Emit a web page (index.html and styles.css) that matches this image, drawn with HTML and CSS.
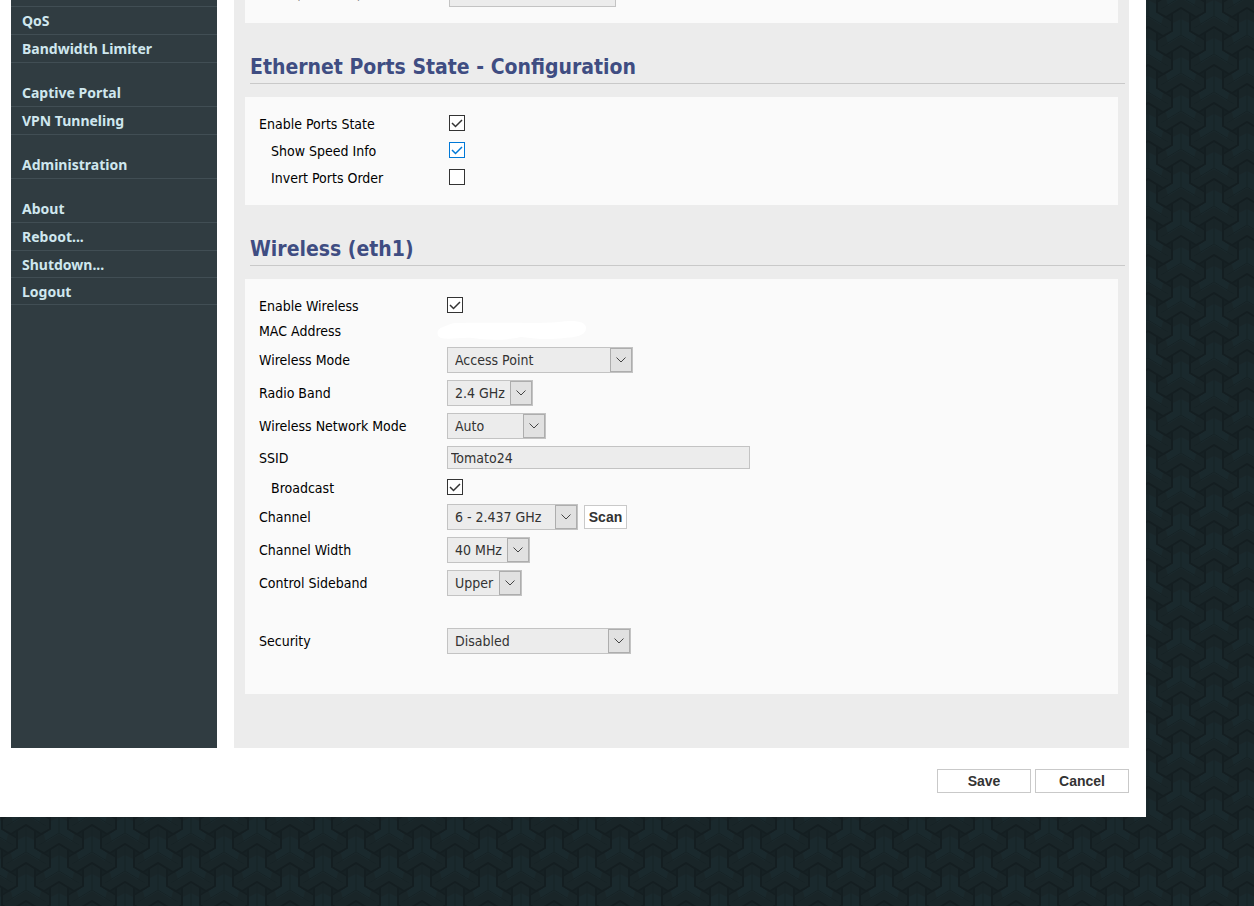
FILE: index.html
```
<!DOCTYPE html>
<html lang="en">
<head>
    <meta charset="UTF-8">
    <meta name="viewport" content="width=device-width, initial-scale=1.0">
    <title>Basic: Network</title>
    <link rel="stylesheet" href="styles.css">
</head>
<body>
    <div class="container">
        <div class="columns">
            <nav class="sidebar">
                <ul class="group">
                    <li><a href="#qos">QoS</a></li>
                    <li><a href="#bandwidth">Bandwidth Limiter</a></li>
                </ul>
                <ul class="group">
                    <li><a href="#captive">Captive Portal</a></li>
                    <li><a href="#vpn">VPN Tunneling</a></li>
                </ul>
                <ul class="group">
                    <li><a href="#admin">Administration</a></li>
                </ul>
                <ul class="group">
                    <li><a href="#about">About</a></li>
                    <li><a href="#reboot">Reboot...</a></li>
                    <li><a href="#shutdown">Shutdown...</a></li>
                    <li><a href="#logout">Logout</a></li>
                </ul>
            </nav>

            <form class="content" id="networkForm">
                <div class="section previous">
                    <div class="row">
                        <label for="wins">WINS <i>(for DHCP)</i></label>
                        <input type="text" class="text short" id="wins">
                    </div>
                </div>

                <h2>Ethernet Ports State - Configuration</h2>
                <div class="section ports">
                    <div class="row check">
                        <label for="ports_state">Enable Ports State</label>
                        <input type="checkbox" id="ports_state" checked>
                    </div>
                    <div class="row check">
                        <label class="indent" for="speed_info">Show Speed Info</label>
                        <input type="checkbox" class="active" id="speed_info" checked>
                    </div>
                    <div class="row check">
                        <label class="indent" for="invert_ports">Invert Ports Order</label>
                        <input type="checkbox" id="invert_ports">
                    </div>
                </div>

                <h2>Wireless (eth1)</h2>
                <div class="section wireless">
                    <div class="row check">
                        <label for="wl_enable">Enable Wireless</label>
                        <input type="checkbox" id="wl_enable" checked>
                    </div>
                    <div class="row mac">
                        <span class="label">MAC Address</span>
                        <svg class="hidden-mac" width="150" height="20" viewBox="0 0 150 20">
                            <path d="M6 6C12 4 14 2 20 2C60 1 100 3 122 1C136 -1 149 0 149 7C149 15 138 16 128 17C110 19 100 18 84 16C66 20 50 19 36 17C24 16 12 19 4 17C-1 15 -1 8 6 6Z" fill="#fff"/>
                        </svg>
                    </div>
                    <div class="row">
                        <label for="wl_mode">Wireless Mode</label>
                        <select id="wl_mode" class="w-mode"><option>Access Point</option></select>
                    </div>
                    <div class="row">
                        <label for="wl_band">Radio Band</label>
                        <select id="wl_band" class="w-band"><option>2.4 GHz</option></select>
                    </div>
                    <div class="row">
                        <label for="wl_net">Wireless Network Mode</label>
                        <select id="wl_net" class="w-net"><option>Auto</option></select>
                    </div>
                    <div class="row ssid">
                        <label for="wl_ssid">SSID</label>
                        <input type="text" class="text" id="wl_ssid" value="Tomato24">
                    </div>
                    <div class="row check">
                        <label class="indent" for="wl_broadcast">Broadcast</label>
                        <input type="checkbox" id="wl_broadcast" checked>
                    </div>
                    <div class="row">
                        <label for="wl_channel">Channel</label>
                        <select id="wl_channel" class="w-channel"><option>6 - 2.437 GHz</option></select>
                        <button type="button" class="scan">Scan</button>
                    </div>
                    <div class="row">
                        <label for="wl_width">Channel Width</label>
                        <select id="wl_width" class="w-width"><option>40 MHz</option></select>
                    </div>
                    <div class="row">
                        <label for="wl_sideband">Control Sideband</label>
                        <select id="wl_sideband" class="w-side"><option>Upper</option></select>
                    </div>
                    <div class="row security">
                        <label for="wl_security">Security</label>
                        <select id="wl_security" class="w-security"><option>Disabled</option></select>
                    </div>
                </div>
            </form>
        </div>

        <div class="footer">
            <button type="submit" form="networkForm">Save</button>
            <button type="reset" form="networkForm">Cancel</button>
        </div>
    </div>
</body>
</html>
```

FILE: styles.css
```
* {
    box-sizing: border-box;
}
body {
    margin: 0;
    min-height: 100vh;
    font-family: Tahoma, "DejaVu Sans Condensed", sans-serif;
    font-size: 14px;
    color: #000;
    background-color: #182427;
    /* woven tripod tile, 66x38 */
    background-image: url("data:image/svg+xml,%3Csvg xmlns='http://www.w3.org/2000/svg' xmlns:xlink='http://www.w3.org/1999/xlink' width='66' height='38'%3E%3Cdefs%3E%3Cg id='t'%3E%3Cpath d='M-9-23L0-28L9-23V-4L24 5V15L15 20L0 11L-15 20L-24 15V5L-9-4Z' fill='%23192528' stroke='%23141e21' stroke-width='2'/%3E%3Cpath d='M-8-12L0-16L8-12V-4L15 1L13 9L0 1L-13 9L-15 1L-8-4Z' fill='%231a292d'/%3E%3Cpath d='M0-26V0L-20 12M0 0L20 12' fill='none' stroke='%23162225'/%3E%3C/g%3E%3C/defs%3E%3Crect width='66' height='38' fill='%23162124'/%3E%3Cuse xlink:href='%23t' x='33' y='51'/%3E%3Cuse xlink:href='%23t' x='0' y='32'/%3E%3Cuse xlink:href='%23t' x='66' y='32'/%3E%3Cuse xlink:href='%23t' x='33' y='13'/%3E%3Cuse xlink:href='%23t' x='0' y='-6'/%3E%3Cuse xlink:href='%23t' x='66' y='-6'/%3E%3C/svg%3E");
    background-position: 26px 22px;
}
.container {
    margin-right: 108px;
    padding: 0 17px 24px 11px;
    background-color: #fff;
}
.columns {
    display: flex;
    gap: 17px;
}
.sidebar {
    width: 206px;
    padding-top: 6px;
    background-color: #303c41;
    font-family: Tahoma, "Noto Sans", sans-serif;
}
.group {
    list-style: none;
    margin: 0 0 16px;
    padding: 0;
}
.group:first-child {
    border-top: 1px solid #414e54;
}
.group a {
    display: block;
    height: 28px;
    padding-left: 11px;
    border-bottom: 1px solid #414e54;
    color: #cfe7ee;
    font-weight: bold;
    line-height: 28px;
    text-decoration: none;
}
.group li:nth-child(n+3) a {
    height: 27px;
}
.content {
    flex: 1;
    padding: 0 11px 54px;
    background-color: #ececec;
}
h2 {
    margin: 28px -7px 13px 5px;
    height: 33px;
    border-bottom: 1px solid #c9c9c9;
    color: #3f4d82;
    font-size: 21px;
    line-height: 32px;
}
.section {
    padding: 14px;
    background-color: #fafafa;
}
.row {
    display: flex;
    align-items: center;
    height: 33px;
}
.row label, .row .label {
    width: 188px;
    line-height: 20px;
}
.row .indent {
    padding-left: 12px;
}
.row.check {
    height: 27px;
}
.check label {
    padding-top: 2px;
}
.previous {
    height: 23px;
    padding-top: 0;
    overflow: hidden;
}
.previous .row {
    height: 23px;
    margin-top: -16px;
}
.previous label, .ports .row label {
    width: 190px;
}
.previous label {
    padding-bottom: 4px;
}
.ports {
    padding: 12px 14px 15px;
}
.wireless {
    padding: 12px 14px 37px;
}
.wireless .mac {
    height: 25px;
}
.wireless .ssid {
    height: 31px;
}
.wireless .security {
    margin-top: 25px;
}
.hidden-mac {
    margin-left: -10px;
}
input[type="checkbox"] {
    appearance: none;
    width: 16px;
    height: 16px;
    margin: 0;
    border: 1px solid #333;
    background-color: #fff;
}
input[type="checkbox"]:checked {
    background-image: url("data:image/svg+xml,%3Csvg xmlns='http://www.w3.org/2000/svg' width='14' height='14'%3E%3Cpath d='M2 7L5.5 10.5L12 4' fill='none' stroke='%23333' stroke-width='1.5'/%3E%3C/svg%3E");
}
input[type="checkbox"].active {
    border-color: #0078d7;
    background-image: url("data:image/svg+xml,%3Csvg xmlns='http://www.w3.org/2000/svg' width='14' height='14'%3E%3Cpath d='M2 7L5.5 10.5L12 4' fill='none' stroke='%230078d7' stroke-width='1.5'/%3E%3C/svg%3E");
}
.text {
    width: 303px;
    height: 23px;
    padding: 0 3px;
    border: 1px solid #c3c3c3;
    background-color: #ececec;
    color: #333;
    font: inherit;
}
.short {
    width: 167px;
}
select {
    appearance: none;
    height: 26px;
    padding: 0 22px 0 7px;
    border: 1px solid #c3c3c3;
    border-radius: 0;
    color: #333;
    font: inherit;
    background: #ececec url("data:image/svg+xml,%3Csvg xmlns='http://www.w3.org/2000/svg' width='22' height='24'%3E%3Crect x='.5' y='.5' width='21' height='23' fill='%23e1e1e1' stroke='%23adadad'/%3E%3Cpath d='M6.5 9.5L11 14L15.5 9.5' fill='none' stroke='%23444'/%3E%3C/svg%3E") no-repeat right center;
}
.w-mode {
    width: 186px;
}
.w-band {
    width: 86px;
}
.w-net {
    width: 99px;
}
.w-channel {
    width: 131px;
}
.w-width {
    width: 83px;
}
.w-side {
    width: 75px;
}
.w-security {
    width: 184px;
}
button {
    width: 94px;
    height: 24px;
    padding: 0;
    border: 1px solid #c9c9c9;
    background-color: #fff;
    color: #333;
    font-family: "Liberation Sans", Arial, sans-serif;
    font-size: 14px;
    font-weight: bold;
}
.scan {
    width: 43px;
    margin-left: 6px;
}
.footer {
    display: flex;
    justify-content: flex-end;
    gap: 4px;
    padding-top: 21px;
}
```
